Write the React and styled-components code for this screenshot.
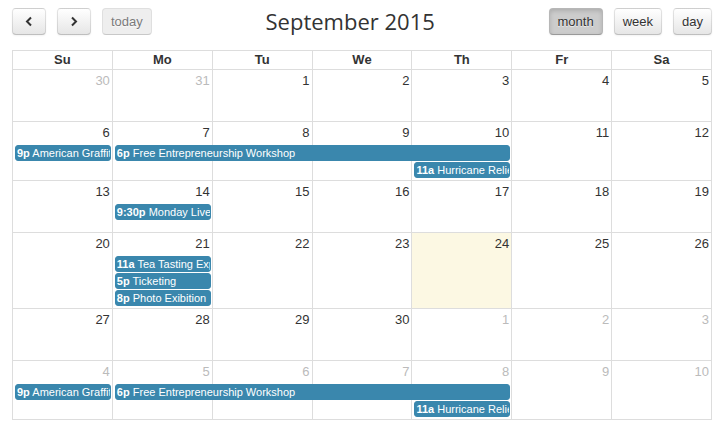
import React from 'react';
import styled, { createGlobalStyle, css } from 'styled-components';

const GlobalStyle = createGlobalStyle`
    html, body {
        margin: 0;
        padding: 0;
        background: #fff;
    }
    body {
        font-family: "Liberation Sans", Arial, sans-serif;
        color: #333;
    }
`;

const Page = styled.div`
    width: 700px;
    padding: 8px 8px 0 12px;
`;

const Toolbar = styled.div`
    display: flex;
    align-items: center;
    height: 27px;
    margin-bottom: 15px;
`;

const ButtonGroup = styled.div`
    display: flex;
    gap: 11px;
`;

const Button = styled.button`
    display: flex;
    align-items: center;
    justify-content: center;
    height: 27px;
    padding: 0 8px;
    font-family: "Liberation Sans", Arial, sans-serif;
    font-size: 13px;
    color: #333;
    border: 1px solid;
    border-color: rgba(0, 0, 0, 0.1) rgba(0, 0, 0, 0.1) rgba(0, 0, 0, 0.25);
    border-radius: 4px;
    background: linear-gradient(to bottom, #ffffff, #e6e6e6);
    box-shadow: inset 0 1px 0 rgba(255, 255, 255, 0.2), 0 1px 2px rgba(0, 0, 0, 0.05);
    text-shadow: 0 1px 1px rgba(255, 255, 255, 0.75);
    cursor: pointer;
    &:disabled {
        opacity: 0.65;
        background: #e6e6e6;
        box-shadow: none;
        cursor: default;
    }
    ${p => p.$active && css`
        background: #cccccc;
        box-shadow: inset 0 2px 4px rgba(0, 0, 0, 0.15), 0 1px 2px rgba(0, 0, 0, 0.05);
    `}
`;

const IconButton = styled(Button)`
    width: 34px;
    padding: 0;
`;

const Title = styled.h2`
    flex: 1;
    margin: 0;
    text-align: center;
    font-family: "Open Sans", sans-serif;
    font-weight: 400;
    font-size: 22px;
    line-height: 27px;
    color: #333;
`;

const Grid = styled.div`
    border-top: 1px solid #ddd;
    border-left: 1px solid #ddd;
`;

const HeadRow = styled.div`
    display: grid;
    grid-template-columns: repeat(7, 1fr);
`;

const HeadCell = styled.div`
    border-right: 1px solid #ddd;
    border-bottom: 1px solid #ddd;
    text-align: center;
    font-weight: bold;
    font-size: 13px;
    line-height: 18px;
`;

const Week = styled.div`
    display: grid;
    grid-template-columns: repeat(7, 1fr);
    grid-template-rows: 23px repeat(${p => p.$levels}, 17px) minmax(1px, 1fr);
    min-height: 51px;
    border-bottom: 1px solid #ddd;
`;

const DayBg = styled.div`
    grid-row: 1 / -1;
    border-right: 1px solid #ddd;
    background: ${p => (p.$today ? '#fcf8e3' : 'transparent')};
`;

const DayNumber = styled.div`
    grid-row: 1;
    padding: 3px 3px 0 0;
    text-align: right;
    font-size: 13px;
    line-height: 15px;
    color: ${p => (p.$other ? '#bbb' : '#333')};
`;

const Event = styled.div`
    height: 14px;
    margin: 0 2px 1px 2px;
    padding: 0 1px;
    border: 1px solid #3a87ad;
    border-radius: 3px;
    background: #3a87ad;
    color: #fff;
    font-size: 11px;
    line-height: 14px;
    white-space: nowrap;
    overflow: hidden;
    min-width: 0;
`;

const EventTime = styled.span`
    font-weight: bold;
`;

const Chevron = ({ dir }) => (
    <svg width="8" height="11" viewBox="0 0 8 11">
        <polyline
            points={dir === 'left' ? '6,1.5 2,5.5 6,9.5' : '2,1.5 6,5.5 2,9.5'}
            fill="none"
            stroke="#333"
            strokeWidth="2"
        />
    </svg>
);

const dayNames = ['Su', 'Mo', 'Tu', 'We', 'Th', 'Fr', 'Sa'];

const septemberEvents = [
    { col: 1, span: 1, level: 0, time: '9p', title: 'American Graffiti' },
    { col: 2, span: 4, level: 0, time: '6p', title: 'Free Entrepreneurship Workshop' },
    { col: 5, span: 1, level: 1, time: '11a', title: 'Hurricane Relief' },
];

const weeks = [
    { days: [[30, true], [31, true], [1], [2], [3], [4], [5]], events: [] },
    { days: [[6], [7], [8], [9], [10], [11], [12]], events: septemberEvents },
    {
        days: [[13], [14], [15], [16], [17], [18], [19]],
        events: [{ col: 2, span: 1, level: 0, time: '9:30p', title: 'Monday Live Music' }],
    },
    {
        days: [[20], [21], [22], [23], [24, false, true], [25], [26]],
        events: [
            { col: 2, span: 1, level: 0, time: '11a', title: 'Tea Tasting Experience' },
            { col: 2, span: 1, level: 1, time: '5p', title: 'Ticketing' },
            { col: 2, span: 1, level: 2, time: '8p', title: 'Photo Exibition' },
        ],
    },
    { days: [[27], [28], [29], [30], [1, true], [2, true], [3, true]], events: [] },
    {
        days: [[4, true], [5, true], [6, true], [7, true], [8, true], [9, true], [10, true]],
        events: septemberEvents,
    },
];

export default function App() {
    return (
        <Page>
            <GlobalStyle />
            <Toolbar>
                <ButtonGroup>
                    <IconButton><Chevron dir="left" /></IconButton>
                    <IconButton><Chevron dir="right" /></IconButton>
                    <Button disabled>today</Button>
                </ButtonGroup>
                <Title>September 2015</Title>
                <ButtonGroup>
                    <Button $active>month</Button>
                    <Button>week</Button>
                    <Button>day</Button>
                </ButtonGroup>
            </Toolbar>
            <Grid>
                <HeadRow>
                    {dayNames.map(d => <HeadCell key={d}>{d}</HeadCell>)}
                </HeadRow>
                {weeks.map((week, w) => {
                    const levels = week.events.reduce((m, e) => Math.max(m, e.level + 1), 0);
                    return (
                        <Week key={w} $levels={levels}>
                            {week.days.map(([n, other, today], i) => (
                                <DayBg key={'bg' + i} $today={today} style={{ gridColumn: i + 1 }} />
                            ))}
                            {week.days.map(([n, other], i) => (
                                <DayNumber key={'n' + i} $other={other} style={{ gridColumn: i + 1 }}>{n}</DayNumber>
                            ))}
                            {week.events.map((e, i) => (
                                <Event
                                    key={'e' + i}
                                    style={{ gridColumn: `${e.col} / span ${e.span}`, gridRow: e.level + 2 }}
                                >
                                    <EventTime>{e.time}</EventTime> {e.title}
                                </Event>
                            ))}
                        </Week>
                    );
                })}
            </Grid>
        </Page>
    );
}
